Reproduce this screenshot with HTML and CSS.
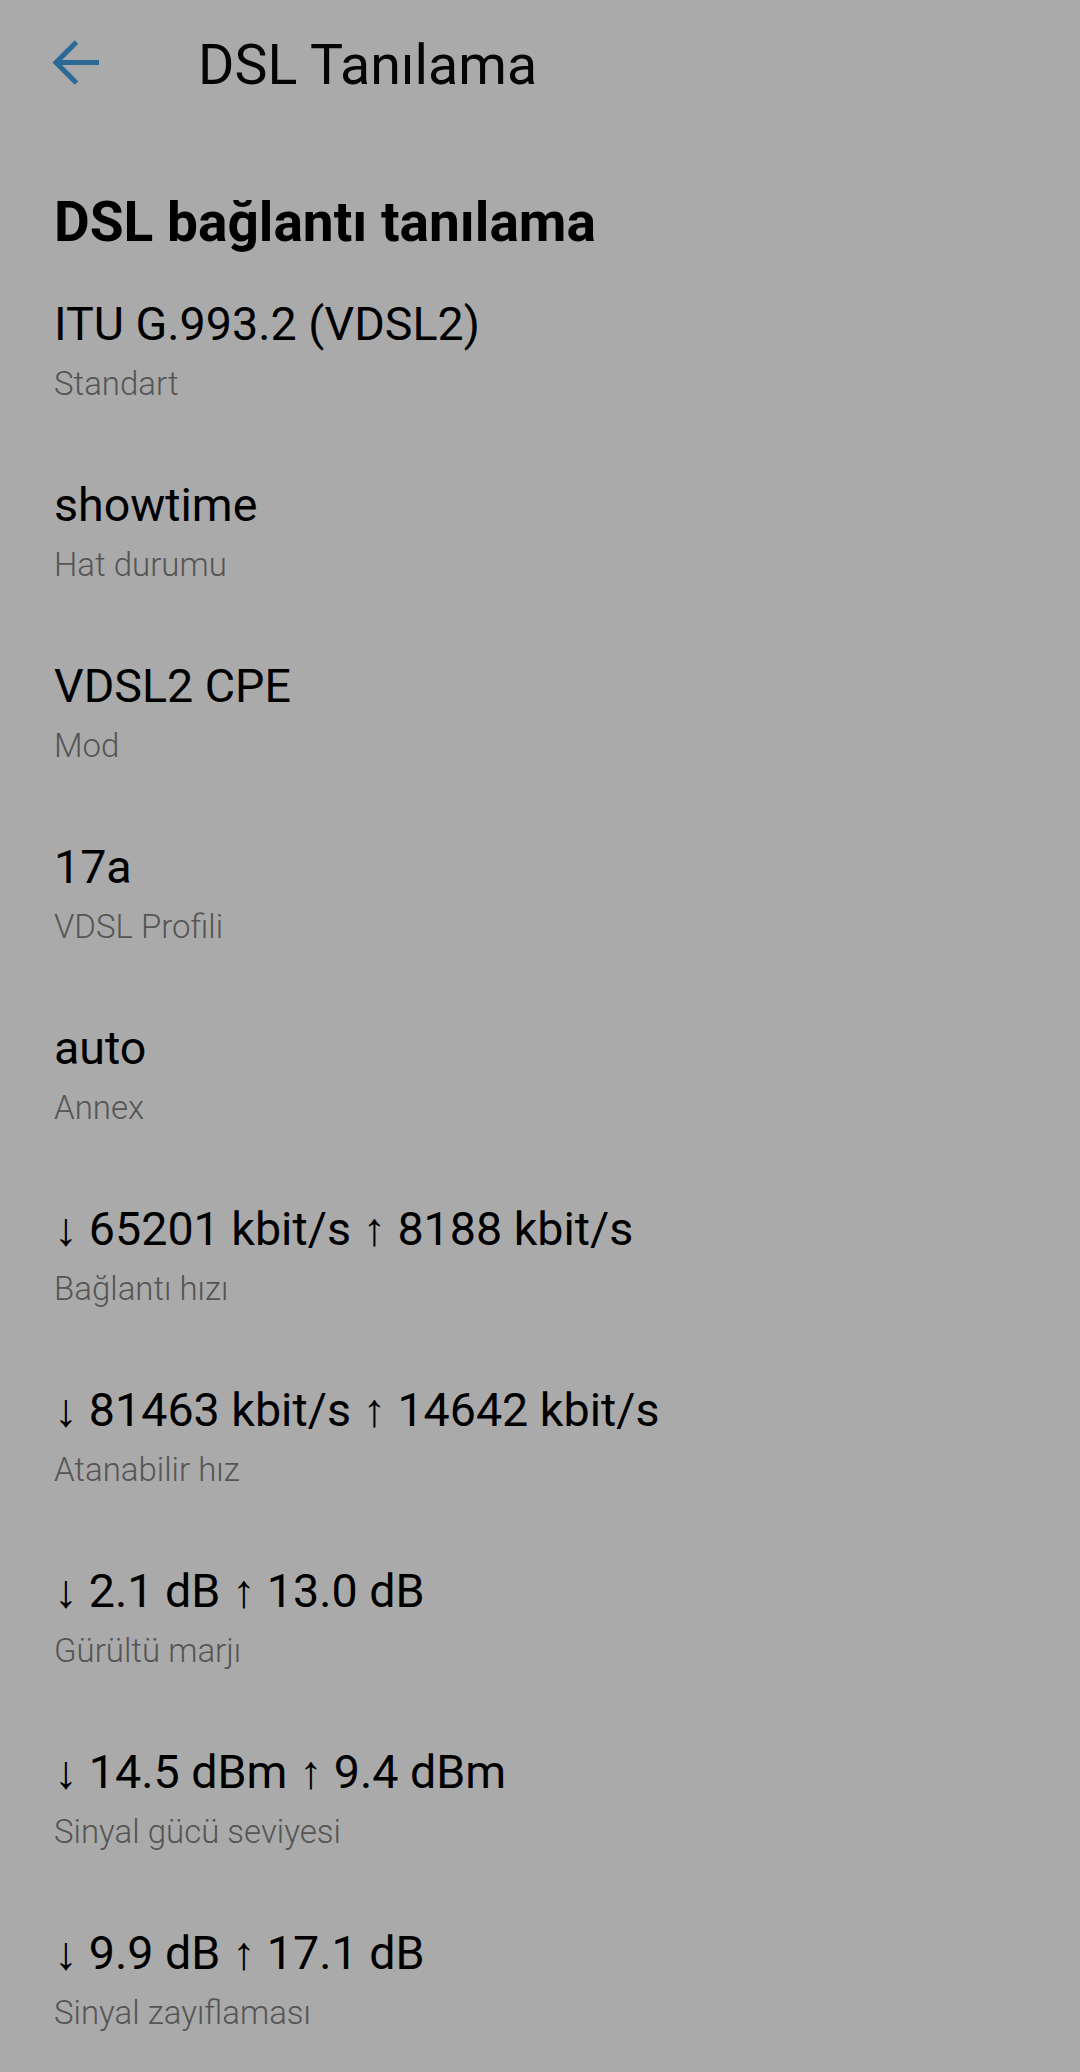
FILE: index.html
```html
<!DOCTYPE html>
<html>
<head>
    <title>DSL Tanılama</title>
    <link rel="stylesheet" href="styles.css">
</head>
<body>
    <header class="toolbar">
        <svg class="back-icon" width="49" height="47" viewBox="0 0 49 47">
            <path d="M4 23.5H47M24.5 3L4 23.5L24.5 44" fill="none" stroke="#2b6a97" stroke-width="5"/>
        </svg>
        <h1 class="toolbar-title">DSL Tanılama</h1>
    </header>

    <section class="content">
        <h2 class="section-title">DSL bağlantı tanılama</h2>
        <ul class="info-list">
            <li class="info-item">
                <div class="info-value">ITU G.993.2 (VDSL2)</div>
                <div class="info-label">Standart</div>
            </li>
            <li class="info-item">
                <div class="info-value">showtime</div>
                <div class="info-label">Hat durumu</div>
            </li>
            <li class="info-item">
                <div class="info-value">VDSL2 CPE</div>
                <div class="info-label">Mod</div>
            </li>
            <li class="info-item">
                <div class="info-value">17a</div>
                <div class="info-label">VDSL Profili</div>
            </li>
            <li class="info-item">
                <div class="info-value">auto</div>
                <div class="info-label">Annex</div>
            </li>
            <li class="info-item">
                <div class="info-value">↓ 65201 kbit/s ↑ 8188 kbit/s</div>
                <div class="info-label">Bağlantı hızı</div>
            </li>
            <li class="info-item">
                <div class="info-value">↓ 81463 kbit/s ↑ 14642 kbit/s</div>
                <div class="info-label">Atanabilir hız</div>
            </li>
            <li class="info-item">
                <div class="info-value">↓ 2.1 dB ↑ 13.0 dB</div>
                <div class="info-label">Gürültü marjı</div>
            </li>
            <li class="info-item">
                <div class="info-value">↓ 14.5 dBm ↑ 9.4 dBm</div>
                <div class="info-label">Sinyal gücü seviyesi</div>
            </li>
            <li class="info-item">
                <div class="info-value">↓ 9.9 dB ↑ 17.1 dB</div>
                <div class="info-label">Sinyal zayıflaması</div>
            </li>
        </ul>
    </section>
</body>
</html>
```

FILE: styles.css
```css
body {
    font-family: Roboto, "Noto Sans", sans-serif;
    margin: 0;
    padding: 0;
    background-color: #aaaaaa;
    color: #000;
}

.toolbar {
    display: flex;
    align-items: flex-start;
    padding: 33px 0 0 52px;
}

.back-icon {
    margin-top: 6px;
    flex: none;
}

.toolbar-title {
    margin: 0 0 0 97px;
    font-size: 55.5px;
    font-weight: 400;
    line-height: 66px;
    color: #050505;
}

.content {
    padding-left: 54px;
}

.section-title {
    margin: 91px 0 6px 0;
    font-size: 55px;
    font-weight: 700;
    line-height: 64px;
}

.info-list {
    list-style: none;
    margin: 0;
    padding: 0;
}

.info-item {
    padding: 36px 0 37px 0;
}

.info-value {
    font-size: 46.6px;
    line-height: 56px;
    white-space: nowrap;
}

.info-label {
    margin-top: 12px;
    font-family: "Roboto Light", Roboto, "Noto Sans", sans-serif;
    font-size: 33px;
    font-weight: 300;
    line-height: 40px;
    color: #555555;
}
```
